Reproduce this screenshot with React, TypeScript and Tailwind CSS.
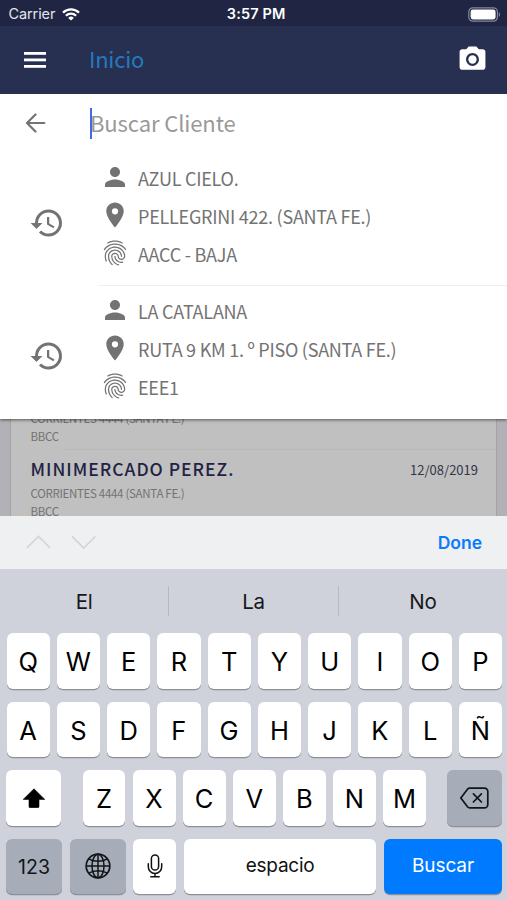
import type { ReactNode } from 'react'
import { MdFingerprint, MdHistory, MdPerson, MdPhotoCamera, MdPlace } from 'react-icons/md'

interface Client {
  name: string
  address: string
  code: string
}

interface Visit extends Client {
  date: string
}

const history: Client[] = [
  { name: 'AZUL CIELO.', address: 'PELLEGRINI 422. (SANTA FE.)', code: 'AACC - BAJA' },
  { name: 'LA CATALANA', address: 'RUTA 9 KM 1. º PISO (SANTA FE.)', code: 'EEE1' }
]

const visits: Visit[] = [
  { name: 'MINIMERCADO PEREZ.', address: 'CORRIENTES 4444 (SANTA FE.)', code: 'BBCC', date: '12/08/2019' },
  { name: 'MINIMERCADO PEREZ.', address: 'CORRIENTES 4444 (SANTA FE.)', code: 'BBCC', date: '12/08/2019' }
]

const suggestions = ['El', 'La', 'No']
const topRow = ['Q', 'W', 'E', 'R', 'T', 'Y', 'U', 'I', 'O', 'P']
const homeRow = ['A', 'S', 'D', 'F', 'G', 'H', 'J', 'K', 'L', 'Ñ']
const bottomRow = ['Z', 'X', 'C', 'V', 'B', 'N', 'M']

function StatusBar() {
  return (
    <div className="flex h-[26px] shrink-0 items-center justify-between bg-[#1f2542] pl-[8.5px] pr-[6px] pt-[2px] font-['Inter',sans-serif] text-white">
      <div className="flex w-[120px] items-center gap-[7px]">
        <span className="text-[14.5px] leading-none tracking-[-0.1px] text-[#e4e6ee]">Carrier</span>
        <svg width="18" height="13" viewBox="0 0 18 13" fill="none" stroke="#fff" strokeWidth="2.3">
          <path d="M1 4.6a11.4 11.4 0 0 1 16 0" />
          <path d="M3.9 7.8a7.3 7.3 0 0 1 10.2 0" />
          <path d="M9 12.6 6.2 9.9a4 4 0 0 1 5.6 0Z" fill="#fff" stroke="none" />
        </svg>
      </div>
      <span className="pl-[3px] text-[14.5px] font-semibold leading-none tracking-[0.15px]">3:57 PM</span>
      <div className="flex w-[120px] justify-end">
        <svg width="33" height="15" viewBox="0 0 33 15">
          <rect x="0.8" y="0.8" width="28.6" height="13.4" rx="4" fill="none" stroke="#8589a0" strokeWidth="1.2" />
          <rect x="2.6" y="2.5" width="25" height="10" rx="2.4" fill="#fff" />
          <path d="M30.8 5.2c1.6.6 1.6 4 0 4.6Z" fill="#8589a0" />
        </svg>
      </div>
    </div>
  )
}

function Header() {
  return (
    <header className="relative z-20 flex h-[67.5px] shrink-0 items-center bg-[#283052] pl-[24px] pr-[19px]">
      <svg width="22" height="16" viewBox="0 0 22 16" fill="#fff">
        <rect width="22" height="2.8" />
        <rect y="6.5" width="22" height="2.8" />
        <rect y="13" width="22" height="2.8" />
      </svg>
      <h1 className="ml-[43px] flex-1 pb-[3px] text-[22px] leading-none tracking-[-0.25px] text-[#2479bd]">Inicio</h1>
      <MdPhotoCamera size={31} className="text-white" />
    </header>
  )
}

function HistoryItem({ client, divider }: { client: Client; divider: boolean }) {
  return (
    <div className="flex h-[133px] items-stretch text-[#737373]">
      <div className="flex w-[98px] items-center pl-[29px] pt-[6px]">
        <MdHistory size={36} />
      </div>
      <div className={`flex-1 pl-[2px] pt-[7px] text-[18px] tracking-[-0.25px] ${divider ? 'border-b border-[#efefef]' : ''}`}>
        <div className="flex h-[38px] items-center gap-[8px]">
          <MdPerson size={30} className="-mt-1" />
          <span className="pb-[2px] leading-none">{client.name}</span>
        </div>
        <div className="flex h-[38px] items-center gap-[8px]">
          <MdPlace size={30} className="-mt-[5px]" />
          <span className="pb-[2px] leading-none">{client.address}</span>
        </div>
        <div className="flex h-[38px] items-center gap-[8px]">
          <MdFingerprint size={30} className="-mt-[5px]" />
          <span className="pb-[2px] leading-none">{client.code}</span>
        </div>
      </div>
    </div>
  )
}

function SearchPanel() {
  return (
    <section className="relative z-10 h-[325px] shrink-0 bg-white shadow-[0_1px_3px_rgba(0,0,0,0.55)]">
      <div className="flex h-[59.5px] items-center pl-[25px]">
        <svg width="21" height="20" viewBox="0 0 21 20" fill="none" stroke="#737373" strokeWidth="2.2" strokeLinecap="round" strokeLinejoin="round">
          <path d="M19.3 10H2M10.5 1.5 2 10l8.5 8.5" />
        </svg>
        <span className="ml-[44px] h-[31px] w-[2px] bg-[#4068f0]" />
        <span className="-ml-[2px] pb-[2px] text-[22px] leading-none tracking-[-0.1px] text-[#999]">Buscar Cliente</span>
      </div>
      {history.map((client, i) => (
        <HistoryItem key={client.name} client={client} divider={i < history.length - 1} />
      ))}
    </section>
  )
}

function VisitList() {
  return (
    <div className="h-[97.5px] shrink-0 overflow-hidden bg-[#b1b1b7] px-[10px]">
      <div className="-mt-[44px] border-x border-[#a3a3a7] bg-[#c0c0c0]">
        {visits.map((visit, i) => (
          <div key={i} className="relative h-[75px] pl-[19.5px] pr-[18px] pt-[9px]">
            <div className="flex h-[21px] items-center justify-between text-[#1f2244]">
              <span className="text-[17.5px] font-medium leading-none tracking-[1px]">{visit.name}</span>
              <span className="text-[13px] leading-none text-[#34354a]">{visit.date}</span>
            </div>
            <div className="mt-[4px] text-[11.5px] leading-[18px] tracking-[-0.3px] text-[#737373]">
              <p>{visit.address}</p>
              <p>{visit.code}</p>
            </div>
            <div className="absolute bottom-0 left-[54px] right-0 h-px bg-[#b8b8b8]" />
          </div>
        ))}
      </div>
    </div>
  )
}

function Key({ children, className = 'flex-1 bg-white pt-[2px] text-[25.5px] text-black' }: { children: ReactNode; className?: string }) {
  return (
    <div className={`flex h-[55.5px] items-center justify-center rounded-[6px] shadow-[0_1.2px_0_#8d9096] ${className}`}>
      {children}
    </div>
  )
}

function Keyboard() {
  return (
    <div className="flex-1 bg-[#cfd2da] font-['Inter',sans-serif] leading-none">
      <div className="flex h-[64px] items-center">
        {suggestions.map((word, i) => (
          <div
            key={word}
            className={`flex h-[30px] flex-1 items-center justify-center pt-[2px] text-[20.5px] tracking-[-0.2px] text-[#16181c] ${i > 0 ? 'border-l border-[#b6b9c1]' : ''}`}
          >
            {word}
          </div>
        ))}
      </div>
      <div className="flex flex-col gap-[13px] pl-[6px] pr-[5px]">
        <div className="flex gap-[7px] pl-[0.5px]">
          {topRow.map((letter) => <Key key={letter}>{letter}</Key>)}
        </div>
        <div className="flex gap-[7px] pl-[0.5px]">
          {homeRow.map((letter) => <Key key={letter}>{letter}</Key>)}
        </div>
        <div className="flex justify-between">
          <Key className="w-[55px] bg-white">
            <svg width="24" height="20" viewBox="0 0 24 20">
              <path d="M12 .8 22.8 11.4H17v7.1a1.2 1.2 0 0 1-1.2 1.2H8.2A1.2 1.2 0 0 1 7 18.5v-7.1H1.2Z" stroke="#000" strokeWidth=".6" strokeLinejoin="round" />
            </svg>
          </Key>
          <div className="flex w-[344px] gap-[7.2px] pl-[0.5px]">
            {bottomRow.map((letter) => <Key key={letter}>{letter}</Key>)}
          </div>
          <Key className="w-[55px] bg-[#a6adb9]">
            <svg width="29" height="22" viewBox="0 0 29 22" fill="none" stroke="#111419" strokeWidth="1.7" strokeLinejoin="round" strokeLinecap="round">
              <path d="M9.6 1.2h14.8a3.4 3.4 0 0 1 3.4 3.4v12.8a3.4 3.4 0 0 1-3.4 3.4H9.6a2.6 2.6 0 0 1-1.9-.8L1.2 11.6a.9.9 0 0 1 0-1.2L7.7 2a2.6 2.6 0 0 1 1.9-.8Z" />
              <path d="m13.4 6.8 8 8.2M21.4 6.8l-8 8.2" />
            </svg>
          </Key>
        </div>
        <div className="flex gap-[7.6px]">
          <Key className="w-[56px] bg-[#a6adb9] pt-[2px] text-[19.5px] text-[#111419]">123</Key>
          <Key className="w-[56px] bg-[#a6adb9]">
            <svg width="26" height="26" viewBox="0 0 26 26" fill="none" stroke="#111419" strokeWidth="1.5">
              <circle cx="13" cy="13" r="11.8" strokeWidth="1.7" />
              <ellipse cx="13" cy="13" rx="6" ry="11.8" />
              <path d="M13 1.2v23.6M1.2 13h23.6M3.8 5.8c5.2 3.3 13.2 3.3 18.4 0M3.8 20.2c5.2-3.3 13.2-3.3 18.4 0" />
            </svg>
          </Key>
          <Key className="w-[43px] bg-white">
            <svg width="16" height="24" viewBox="0 0 16 24" fill="none" stroke="#111" strokeWidth="1.5" strokeLinecap="round">
              <rect x="4.4" y="1" width="7.2" height="15" rx="3.6" />
              <path d="M1.3 9.8v3a6.7 6.7 0 0 0 13.4 0v-3M8 19.5v3.2M3.8 22.8h8.4" />
            </svg>
          </Key>
          <Key className="flex-1 bg-white pb-[2px] text-[19px] tracking-[-0.25px] text-[#111]">espacio</Key>
          <Key className="w-[118px] bg-[#007aff] pb-[2px] text-[19px] tracking-[-0.1px] text-white">Buscar</Key>
        </div>
      </div>
    </div>
  )
}

export default function App() {
  return (
    <div className="flex h-[900px] w-[507px] flex-col overflow-hidden bg-white font-['Noto_Sans_CJK_SC',sans-serif]">
      <StatusBar />
      <Header />
      <SearchPanel />
      <VisitList />
      {/* Input accessory bar */}
      <div className="flex h-[53px] shrink-0 items-center bg-[#eff0f2] pl-[26px] pr-[25px] font-['Inter',sans-serif]">
        <svg width="72" height="14" viewBox="0 0 72 14" fill="none" stroke="#d2d5d7" strokeWidth="1.7" className="-mt-[2px]">
          <path d="M.8 13 12.5 1.4 24.2 13" />
          <path d="M46 1.4 57.7 13 69.4 1.4" />
        </svg>
        <span className="ml-auto text-[17.5px] font-semibold leading-none text-[#0a7aff]">Done</span>
      </div>
      <Keyboard />
    </div>
  )
}
